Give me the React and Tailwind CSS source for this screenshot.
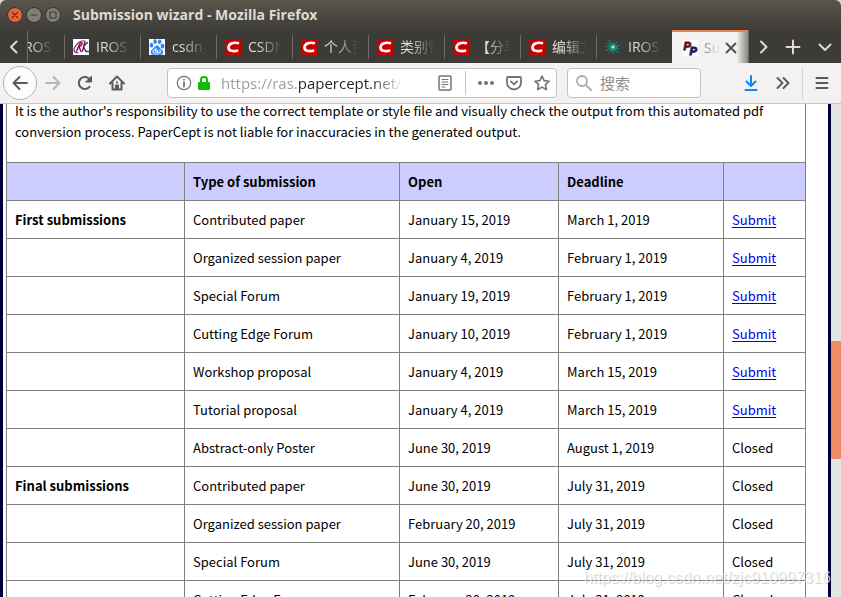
import React from 'react';
import { SiBaidu } from 'react-icons/si';

const rows = [
  { group: 'First submissions', type: 'Contributed paper', open: 'January 15, 2019', deadline: 'March 1, 2019', active: true },
  { type: 'Organized session paper', open: 'January 4, 2019', deadline: 'February 1, 2019', active: true },
  { type: 'Special Forum', open: 'January 19, 2019', deadline: 'February 1, 2019', active: true },
  { type: 'Cutting Edge Forum', open: 'January 10, 2019', deadline: 'February 1, 2019', active: true },
  { type: 'Workshop proposal', open: 'January 4, 2019', deadline: 'March 15, 2019', active: true },
  { type: 'Tutorial proposal', open: 'January 4, 2019', deadline: 'March 15, 2019', active: true },
  { type: 'Abstract-only Poster', open: 'June 30, 2019', deadline: 'August 1, 2019' },
  { group: 'Final submissions', type: 'Contributed paper', open: 'June 30, 2019', deadline: 'July 31, 2019' },
  { type: 'Organized session paper', open: 'February 20, 2019', deadline: 'July 31, 2019' },
  { type: 'Special Forum', open: 'June 30, 2019', deadline: 'July 31, 2019' },
  { type: 'Cutting Edge Forum', open: 'February 20, 2019', deadline: 'July 31, 2019' },
];

const tabs = [
  { icon: 'ras', title: 'IROS' },
  { icon: 'ras', title: 'IROS' },
  { icon: 'baidu', title: 'csdn_' },
  { icon: 'csdn', title: 'CSDN' },
  { icon: 'csdn', title: '个人资' },
  { icon: 'csdn', title: '类别管' },
  { icon: 'csdn', title: '【分享' },
  { icon: 'csdn', title: '编辑文' },
  { icon: 'iros', title: 'IROS' },
];

function Icon({ children, size = 'size-4', width = 2, className = '' }) {
  return (
    <svg
      viewBox="0 0 16 16"
      className={`${size} shrink-0 ${className}`}
      fill="none"
      stroke="currentColor"
      strokeWidth={width}
      strokeLinecap="round"
      strokeLinejoin="round"
      aria-hidden="true"
    >
      {children}
    </svg>
  );
}

function Favicon({ name }) {
  switch (name) {
    case 'ras':
      return (
        <svg viewBox="0 0 16 16" className="size-4 shrink-0 bg-white" fill="none" strokeLinecap="round" aria-hidden="true">
          <path d="M5 13.500C1 14.500 0 11 2 8C4 4 8 1.500 11 1.800" stroke="#7b2b7d" strokeWidth="1.200" />
          <path d="M3.500 12L7.500 3.500C10 3 9.500 6.500 6 7.500L8 12.500" stroke="#a0123c" strokeWidth="1.500" />
          <path d="M12 2.500L9.500 12M14.500 3.500L10.500 7.500L13 12.500H15.500" stroke="#5b2067" strokeWidth="1.400" />
        </svg>
      );
    case 'baidu':
      return (
        <span className="flex size-4 shrink-0 items-center justify-center bg-white">
          <SiBaidu className="size-4 text-[#3385ff]" />
        </span>
      );
    case 'csdn':
      return (
        <svg viewBox="0 0 16 16" className="size-4 shrink-0 bg-[#cc0000]" fill="none" aria-hidden="true">
          <path d="M14 4.300C9 2.800 3.800 4.200 3.500 8.200C3.300 12.200 8 12.800 13.200 11.600" stroke="#fff" strokeWidth="2.600" />
        </svg>
      );
    case 'iros':
      return (
        <svg viewBox="0 0 16 16" className="size-4 shrink-0" stroke="#15806f" fill="none" strokeLinecap="round" aria-hidden="true">
          <circle cx="8" cy="8.500" r="4" fill="#15806f" />
          <path
            d="M8 8L4 1.500M8 8L8 2.500M8 8L12 3M8 8L15 6M8 8L14.500 10M8 8L12.500 13.500M8 8L8 15M8 8L4 14M8 8L1 11.500M8 8L.8 7.500M8 8L2.500 4.500"
            strokeWidth="1.200"
            strokeDasharray="5 1 2"
          />
          <circle cx="8" cy="8" r="1.800" fill="#9be3cf" stroke="none" />
        </svg>
      );
    default:
      return (
        <svg viewBox="0 0 16 16" className="size-4 shrink-0 bg-white" aria-hidden="true">
          <g fontFamily="Liberation Sans, sans-serif" fontWeight="700" fontStyle="italic" strokeWidth="1">
            <text x="1.500" y="9.500" fontSize="11" fill="#a32020" stroke="#501010">P</text>
            <text x="7.500" y="15" fontSize="11" fill="#2d3fae" stroke="#101550">P</text>
          </g>
        </svg>
      );
  }
}

function TitleBar() {
  return (
    <header className="flex h-[30px] shrink-0 items-center rounded-t-md bg-linear-to-b from-[#5a564b] to-[#3e3d38] px-[7px]">
      <div className="flex gap-[3px]">
        <button aria-label="Close" className="flex size-4 items-center justify-center rounded-full border border-[#343330] bg-[#ec6237] text-[#5b2210]">
          <Icon size="size-3" width={1.500}><path d="M4.500 4.500l7 7M11.500 4.500l-7 7" /></Icon>
        </button>
        <button aria-label="Minimize" className="flex size-4 items-center justify-center rounded-full border border-[#343330] bg-[#827f76] text-[#3b3a36]">
          <Icon size="size-3" width={1.500}><path d="M4 8h8" /></Icon>
        </button>
        <button aria-label="Maximize" className="flex size-4 items-center justify-center rounded-full border border-[#343330] bg-[#827f76] text-[#3b3a36]">
          <Icon size="size-3" width={1.500}><path d="M4 4h8v8H4z" /></Icon>
        </button>
      </div>
      <h1 className="ml-3 text-[14px] leading-[18px] font-bold text-[#dfdbd2]">Submission wizard - Mozilla Firefox</h1>
    </header>
  );
}

function TabBar() {
  return (
    <nav className="flex h-[33px] shrink-0 bg-[#3c3b37] text-[#dfdbd2]">
      <button aria-label="Scroll tabs left" className="flex w-7 shrink-0 items-center justify-center border-r border-[#6b6963]">
        <Icon><path d="M10.500 2.500L5 8l5.500 5.500" /></Icon>
      </button>
      <div className="flex min-w-0 flex-1 justify-end overflow-hidden">
        {tabs.map((tab, i) => (
          <button key={i} className="flex w-19 shrink-0 items-center text-left">
            <span className="h-6 w-px bg-[#6b6963]" />
            <span className="ml-2"><Favicon name={tab.icon} /></span>
            <span className="ml-[7px] w-9 overflow-hidden whitespace-nowrap text-[14px] [mask-image:linear-gradient(to_right,black_30%,transparent_95%)]">
              {tab.title}
            </span>
          </button>
        ))}
        <div className="flex w-19 shrink-0 items-center border-t-2 border-[#f0804f] bg-linear-to-r from-[#f3f2f1] from-85% to-[#8b8a88] pl-[10px] text-[#4c4c4c]">
          <Favicon name="papercept" />
          <span className="ml-[6px] w-[19px] overflow-hidden whitespace-nowrap text-[14px] text-[#8a8a8a] [mask-image:linear-gradient(to_right,black,transparent_85%)]">
            Su
          </span>
          <button aria-label="Close tab"><Icon width={1.800}><path d="M3.500 3.500l9 9M12.500 3.500l-9 9" /></Icon></button>
        </div>
      </div>
      <button aria-label="Scroll tabs right" className="flex w-[30px] shrink-0 items-center justify-center border-l border-[#6b6963]">
        <Icon><path d="M5 2.500L10.500 8 5 13.500" /></Icon>
      </button>
      <button aria-label="New tab" className="flex w-[30px] shrink-0 items-center justify-center">
        <Icon><path d="M8 1.500v13M1.500 8h13" /></Icon>
      </button>
      <button aria-label="All tabs" className="flex w-[33px] shrink-0 items-center justify-center">
        <Icon><path d="M2.500 5.500L8 11l5.500-5.500" /></Icon>
      </button>
    </nav>
  );
}

function Toolbar() {
  return (
    <div className="flex h-[41px] shrink-0 items-center border-b border-[#c8c6c4] bg-[#f3f2f1] pl-[3px] text-[#5a5a59]">
      <button aria-label="Back" className="flex size-[34px] shrink-0 items-center justify-center rounded-full border border-[#b5b3b1] bg-[#fcfcfc]">
        <Icon><path d="M15 8H1.500M7.500 2L1.500 8l6 6" /></Icon>
      </button>
      <button aria-label="Forward" className="ml-2 shrink-0 text-[#b5b5b4]">
        <Icon><path d="M1 8h13.500M8.500 2l6 6-6 6" /></Icon>
      </button>
      <button aria-label="Reload" className="ml-4 shrink-0">
        <Icon>
          <path d="M12.500 11.800A6 6 0 1 1 12.600 4.300" />
          <path d="M14.500 1.500v5.500H9z" fill="currentColor" strokeWidth="1" />
        </Icon>
      </button>
      <button aria-label="Home" className="ml-4 shrink-0">
        <Icon>
          <path d="M1 8.500L8 1.500l7 7M3.500 8v6.500h9V8" />
          <path d="M7 14V10.500h2V14" />
          <path d="M8 7.300v.1" />
        </Icon>
      </button>
      <div className="ml-[42px] flex h-[30px] min-w-0 flex-1 items-center rounded-sm border border-[#c4c2c0] bg-white pr-[6px] pl-2 text-[#737373]">
        <Icon width={1.200}>
          <circle cx="8" cy="8" r="6.700" />
          <path d="M8 7.500v4M8 4.600v.2" strokeWidth="1.800" />
        </Icon>
        <svg viewBox="0 0 14 16" className="ml-[5px] h-4 w-[14px] shrink-0" aria-hidden="true">
          <path d="M4 8V5a3 3 0 0 1 6 0v3" fill="none" stroke="#12bc00" strokeWidth="2" />
          <rect x="1" y="7" width="12" height="8" rx="1" fill="#12bc00" />
        </svg>
        <input
          aria-label="Address"
          defaultValue="https://ras.papercept.net/"
          className="ml-[10px] w-0 min-w-0 flex-1 bg-linear-[to_right,#9a9a9a_78px,#222_78px,#222_150px,transparent_182px] bg-clip-text text-[15px] text-transparent outline-none"
        />
        <button aria-label="Reader view" className="ml-2 shrink-0">
          <Icon width={1.500}>
            <rect x="2" y="1" width="12" height="14" rx="1" />
            <path d="M5 4.500h6M5 7h6M5 9.500h6M5 12h3" strokeWidth="1" />
          </Icon>
        </button>
        <span className="mx-3 h-6 w-px shrink-0 bg-[#c9c9c9]" />
        <button aria-label="Page actions" className="shrink-0">
          <Icon className="fill-current" width={0}>
            <circle cx="2" cy="8" r="2" />
            <circle cx="8" cy="8" r="2" />
            <circle cx="14" cy="8" r="2" />
          </Icon>
        </button>
        <button aria-label="Save to Pocket" className="ml-3 shrink-0">
          <Icon width={1.800}>
            <path d="M2 2h12q1 0 1 1v4.500a7 7 0 0 1-14 0V3q0-1 1-1z" />
            <path d="M4.800 6.300L8 9.300l3.200-3" />
          </Icon>
        </button>
        <button aria-label="Bookmark" className="ml-3 shrink-0">
          <Icon width={1.600}>
            <path d="M8 1l2.100 4.600 5 .6-3.700 3.400 1 5L8 12.100l-4.400 2.500 1-5L.9 6.200l5-.6z" />
          </Icon>
        </button>
      </div>
      <label className="ml-[10px] flex h-[30px] w-[134px] shrink-0 items-center rounded-sm border border-[#c4c2c0] bg-white px-2 text-[#aaaaaa]">
        <Icon width={1.800}>
          <circle cx="6" cy="6" r="5" />
          <path d="M9.800 9.800L15 15" />
        </Icon>
        <input
          aria-label="搜索"
          placeholder="搜索"
          className="ml-2 w-0 min-w-0 flex-1 text-[15px] outline-none placeholder:text-[#8f8f8f]"
        />
      </label>
      <button aria-label="Downloads" className="ml-[42px] shrink-0 text-[#0a84ff]">
        <Icon><path d="M8 1v10M3.500 6.500L8 11l4.500-4.500M2.500 15h11" /></Icon>
      </button>
      <button aria-label="More tools" className="ml-4 shrink-0">
        <Icon><path d="M2.500 3L7.500 8l-5 5M8.500 3l5 5-5 5" /></Icon>
      </button>
      <span className="ml-[11px] h-8 w-px shrink-0 bg-[#d4d2d0]" />
      <button aria-label="Menu" className="mx-[11px] shrink-0">
        <Icon><path d="M2.500 3h11M2.500 8h11M2.500 13h11" /></Icon>
      </button>
    </div>
  );
}

function SubmissionTable() {
  const cell = 'h-[38px] border border-[#808080] px-2 py-0 text-left';
  return (
    <table className="w-full table-fixed border-collapse">
      <colgroup>
        <col className="w-[178px]" />
        <col className="w-[215px]" />
        <col className="w-[159px]" />
        <col className="w-[165px]" />
        <col />
      </colgroup>
      <thead>
        <tr className="bg-[#ccccff]">
          <th className={cell} />
          <th className={cell}>Type of submission</th>
          <th className={cell}>Open</th>
          <th className={cell}>Deadline</th>
          <th className={cell} />
        </tr>
      </thead>
      <tbody>
        {rows.map((row, i) => (
          <tr key={i}>
            <th className={cell}>{row.group}</th>
            <td className={cell}>{row.type}</td>
            <td className={cell}>{row.open}</td>
            <td className={cell}>{row.deadline}</td>
            <td className={cell}>
              {row.active ? <a href="#submit" className="text-[#0000ee] underline underline-offset-2">Submit</a> : 'Closed'}
            </td>
          </tr>
        ))}
      </tbody>
    </table>
  );
}

export default function App() {
  return (
    <div className="relative flex h-screen flex-col overflow-hidden bg-[#d8d8d8] font-['Open_Sans','Noto_Sans_CJK_SC',sans-serif]">
      <TitleBar />
      <TabBar />
      <Toolbar />
      <div className="flex min-h-0 flex-1 overflow-hidden">
        <main className="min-w-0 flex-1 border-x-3 border-[#00003c] bg-white pr-[22px] pl-[3px] font-['Noto_Sans_CJK_SC',sans-serif] text-[13px] leading-[21px] text-black">
          <p className="-mt-1 border-x border-[#808080] px-2 pb-5">
            It is the author's responsibility to use the correct template or style file and visually check the output from this automated pdf
            conversion process. PaperCept is not liable for inaccuracies in the generated output.
          </p>
          <SubmissionTable />
        </main>
        <div className="w-[10px] shrink-0 bg-[#e5e5e5] pt-[237px]">
          <div className="h-[118px] bg-[#f08c66]" />
        </div>
      </div>
      <span className="absolute right-[10px] bottom-2 font-['Liberation_Sans',sans-serif] text-[16px] leading-[22px] text-white/70 [text-shadow:1px_1px_1px_rgba(0,0,0,0.2)]">
        https://blog.csdn.net/zjc910997316
      </span>
    </div>
  );
}
